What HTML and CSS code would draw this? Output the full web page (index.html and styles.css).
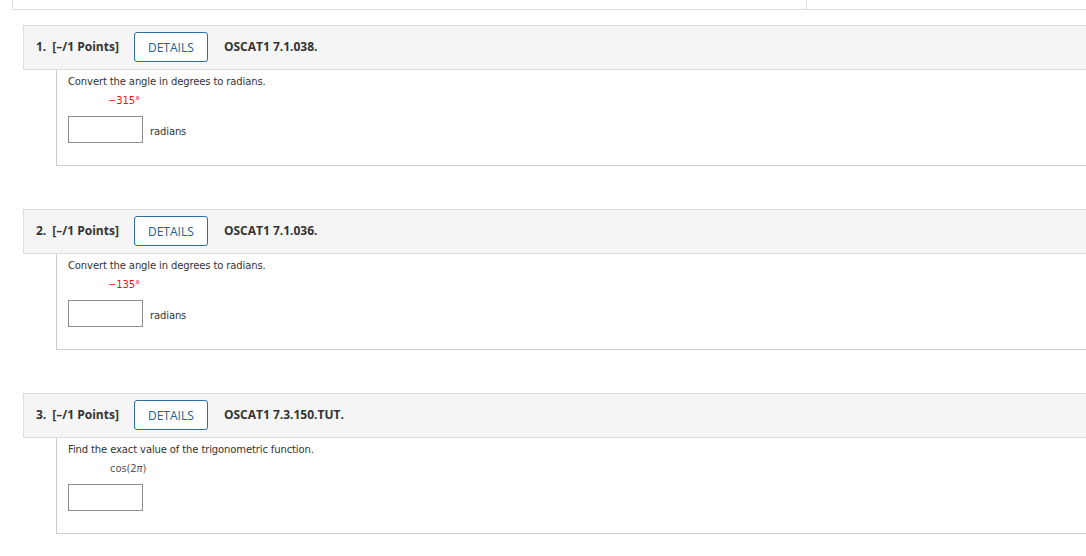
FILE: index.html
```html
<!DOCTYPE html>
<html>
<head>
<meta charset="utf-8">
<link rel="stylesheet" href="styles.css">
</head>
<body>
<div class="topstrip"><div class="topcell"></div><div class="topcell2"></div></div>
<div class="questions">
  <div class="question">
    <div class="qhead">
      <span class="qnum">1.</span>
      <span class="qpts">[–/1 Points]</span>
      <span class="details">DETAILS</span>
      <span class="qid">OSCAT1 7.1.038.</span>
    </div>
    <div class="qbody">
      <div class="prompt">Convert the angle in degrees to radians.</div>
      <div class="math red">−315°</div>
      <div class="answer"><span class="box"></span><span class="unit">radians</span></div>
    </div>
  </div>
  <div class="question">
    <div class="qhead">
      <span class="qnum">2.</span>
      <span class="qpts">[–/1 Points]</span>
      <span class="details">DETAILS</span>
      <span class="qid">OSCAT1 7.1.036.</span>
    </div>
    <div class="qbody">
      <div class="prompt">Convert the angle in degrees to radians.</div>
      <div class="math red">−135°</div>
      <div class="answer"><span class="box"></span><span class="unit">radians</span></div>
    </div>
  </div>
  <div class="question">
    <div class="qhead">
      <span class="qnum">3.</span>
      <span class="qpts">[–/1 Points]</span>
      <span class="details">DETAILS</span>
      <span class="qid">OSCAT1 7.3.150.TUT.</span>
    </div>
    <div class="qbody">
      <div class="prompt">Find the exact value of the trigonometric function.</div>
      <div class="math gray">cos(2<i>π</i>)</div>
      <div class="answer"><span class="box"></span></div>
    </div>
  </div>
</div>
</body>
</html>
```
FILE: styles.css
```css
html, body {
  margin: 0;
  padding: 0;
  background: #fff;
  overflow: hidden;
}
.topstrip {
  margin-left: 12px;
  height: 9px;
  border-left: 1px solid #ddd;
  border-bottom: 1px solid #ddd;
  display: flex;
}
.topcell {
  width: 793px;
  border-right: 1px solid #ddd;
}
.questions {
  margin-left: 23px;
  margin-top: 15px;
}
.question {
  margin-bottom: 43px;
}
.qhead {
  height: 43px;
  background: #f5f5f5;
  border: 1px solid #ddd;
  border-right: none;
  display: flex;
  align-items: center;
  font-family: "Open Sans", sans-serif;
  font-size: 12px;
  color: #333;
}
.qnum {
  font-weight: bold;
  margin-left: 12px;
  margin-right: 6px;
  padding-bottom: 2px;
}
.qpts {
  font-weight: bold;
  padding-bottom: 2px;
}
.details {
  margin-left: 15px;
  margin-bottom: 1px;
  width: 72px;
  height: 28px;
  border: 1px solid #2b6ea5;
  border-radius: 3px;
  color: #235e95;
  display: flex;
  align-items: center;
  justify-content: center;
  background: #fff;
  box-sizing: content-box;
}
.qid {
  font-weight: bold;
  margin-left: 16px;
  padding-bottom: 2px;
}
.qbody {
  margin-left: 33px;
  height: 95px;
  border-left: 1px solid #ccc;
  border-bottom: 1px solid #ccc;
  padding-left: 11px;
  font-family: "DejaVu Sans", Verdana, sans-serif;
  font-size: 10px;
  letter-spacing: -0.12px;
  color: #333;
}
.prompt {
  padding-top: 5px;
  line-height: 14px;
}
.math {
  margin-top: 5px;
  line-height: 14px;
  padding-left: 40px;
}
.red { color: #e81515; }
.gray { color: #555; padding-left: 42px; }
.math i { font-style: italic; }
.answer {
  margin-top: 8px;
  display: flex;
  align-items: center;
}
.box {
  width: 73px;
  height: 25px;
  border: 1px solid #8c8c8c;
  background: #fff;
}
.unit {
  margin-left: 7px;
  padding-top: 3px;
}
```
